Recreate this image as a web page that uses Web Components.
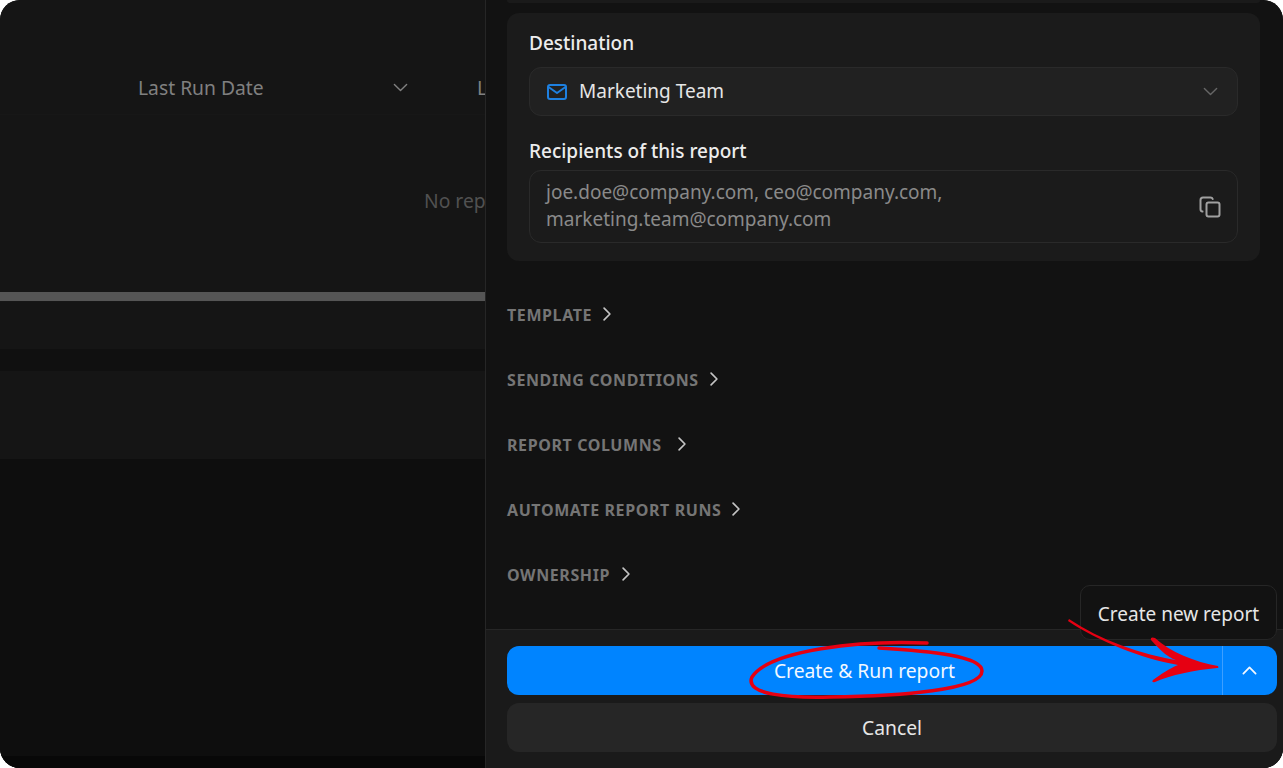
<!DOCTYPE html>
<html lang="en">
<head>
<meta charset="utf-8">
<title>Create report</title>
<style>
    html, body { margin: 0; height: 100%; background: #fff; }
    body { font-family: "Noto Sans", "Liberation Sans", sans-serif; overflow: hidden; }
</style>
</head>
<body>
<app-shell>
    <report-table slot="table"></report-table>
    <report-panel slot="panel">
        <destination-card></destination-card>
        <section-row slot="sections">TEMPLATE</section-row>
        <section-row slot="sections">SENDING CONDITIONS</section-row>
        <section-row slot="sections" style="--gap: 17px">REPORT COLUMNS</section-row>
        <section-row slot="sections">AUTOMATE REPORT RUNS</section-row>
        <section-row slot="sections" style="--gap: 13px">OWNERSHIP</section-row>
        <split-button slot="footer">Create &amp; Run report</split-button>
        <plain-button slot="footer">Cancel</plain-button>
    </report-panel>
    <red-markup slot="markup"></red-markup>
</app-shell>

<script>
const chevron = (dir, size, color, width = 1.6) => {
    const paths = {
        down: 'M5 8.5l7 7 7-7',
        up: 'M5 15.5l7-7 7 7',
        right: 'M8.5 5l7 7-7 7'
    };
    return `<svg width="${size}" height="${size}" viewBox="0 0 24 24" fill="none" stroke="${color}" stroke-width="${width}" stroke-linecap="round" stroke-linejoin="round"><path d="${paths[dir]}"/></svg>`;
};

class AppShell extends HTMLElement {
    constructor() {
        super();
        this.attachShadow({ mode: 'open' });
        this.shadowRoot.innerHTML = `
            <style>
                :host {
                    display: grid;
                    grid-template-columns: 485px 1fr;
                    position: relative;
                    width: 1283px;
                    height: 768px;
                    border-radius: 20px;
                    overflow: hidden;
                    background: #121212;
                }
            </style>
            <slot name="table"></slot>
            <slot name="panel"></slot>
            <slot name="markup"></slot>
        `;
    }
}

class ReportTable extends HTMLElement {
    constructor() {
        super();
        this.attachShadow({ mode: 'open' });
        this.shadowRoot.innerHTML = `
            <style>
                :host {
                    display: flex;
                    flex-direction: column;
                    height: 768px;
                    overflow: hidden;
                    background: #151515;
                    white-space: nowrap;
                    font-size: 19.3px;
                }
                .head {
                    height: 115px;
                    flex: none;
                    display: flex;
                    align-items: center;
                    padding: 61px 0 0 138px;
                    box-sizing: border-box;
                    border-bottom: 1px solid #171717;
                    color: #808080;
                }
                .col { flex: none; width: 273px; display: flex; align-items: center; justify-content: space-between; }
                .next { flex: none; margin-left: 66px; letter-spacing: -3px; }
                .empty {
                    flex: none;
                    height: 177px;
                    box-sizing: border-box;
                    padding: 73px 0 0 424px;
                    color: #515151;
                    line-height: 26px;
                }
                .scrollbar { flex: none; height: 9px; background: #555; }
                .row { flex: none; height: 48px; border-top: 1px solid #171717; box-sizing: border-box; }
                .gap { flex: none; height: 22px; background: #101010; }
                .totals { flex: none; height: 88px; }
                .rest { flex: 1; background: #0e0e0e; }
                .edge { flex: none; height: 12px; background: #080808; }
            </style>
            <div class="head">
                <div class="col"><span>Last Run Date</span>${chevron('down', 21, '#808080')}</div>
                <span class="next">L</span>
            </div>
            <div class="empty">No rep</div>
            <div class="scrollbar"></div>
            <div class="row"></div>
            <div class="gap"></div>
            <div class="totals"></div>
            <div class="rest"></div>
            <div class="edge"></div>
        `;
    }
}

class ReportPanel extends HTMLElement {
    constructor() {
        super();
        this.attachShadow({ mode: 'open' });
        this.shadowRoot.innerHTML = `
            <style>
                :host {
                    display: flex;
                    flex-direction: column;
                    height: 768px;
                    position: relative;
                    background: #121212;
                    border-left: 1px solid #262626;
                    box-sizing: border-box;
                }
                .body { flex: 1; padding: 0 23px 0 21px; min-height: 0; }
                .sliver { height: 3px; margin-bottom: 10px; background: #1a1a1a; border-radius: 0 0 10px 10px; }
                .sections { margin-top: 22px; }
                .footer {
                    flex: none;
                    height: 139px;
                    box-sizing: border-box;
                    border-top: 1px solid #262626;
                    background: #1a1a1a;
                    padding: 16px 6px 0 21px;
                    display: flex;
                    flex-direction: column;
                    gap: 8px;
                }
                .tip {
                    position: absolute;
                    right: 6px;
                    top: 585px;
                    width: 197px;
                    height: 55px;
                    box-sizing: border-box;
                    padding-top: 2px;
                    background: #121212;
                    border: 1px solid #262626;
                    border-radius: 10px;
                    color: #e6e6e6;
                    font-size: 19px;
                    display: flex;
                    align-items: center;
                    justify-content: center;
                }
            </style>
            <div class="body">
                <div class="sliver"></div>
                <slot></slot>
                <div class="sections"><slot name="sections"></slot></div>
            </div>
            <div class="footer"><slot name="footer"></slot></div>
            <div class="tip">Create new report</div>
        `;
    }
}

class DestinationCard extends HTMLElement {
    constructor() {
        super();
        this.attachShadow({ mode: 'open' });
        this.shadowRoot.innerHTML = `
            <style>
                :host {
                    display: block;
                    height: 248px;
                    box-sizing: border-box;
                    padding: 18px 22px;
                    background: #1b1b1b;
                    border-radius: 12px;
                    font-size: 19px;
                }
                label { display: block; height: 24px; line-height: 24px; color: #ededed; font-weight: 500; }
                .select {
                    height: 49px;
                    margin: 12px 0 23px;
                    box-sizing: border-box;
                    display: flex;
                    align-items: center;
                    padding: 0 16px 0 17px;
                    background: #212121;
                    border: 1px solid #2a2a2a;
                    border-radius: 12px;
                    color: #e6e6e6;
                }
                .select span { flex: 1; margin-left: 12px; line-height: 24px; margin-top: -1px; }
                .box {
                    height: 73px;
                    margin-top: 7px;
                    box-sizing: border-box;
                    display: flex;
                    align-items: center;
                    justify-content: space-between;
                    padding: 0 16px;
                    background: #1b1b1b;
                    border: 1px solid #2a2a2a;
                    border-radius: 12px;
                    color: #8a8a8a;
                    line-height: 27px;
                }
                .box div { margin-top: -2px; }
            </style>
            <label>Destination</label>
            <div class="select">
                <svg width="20" height="16" viewBox="0 0 20 16" fill="none" stroke="#1e80e0" stroke-width="2" stroke-linejoin="round" stroke-linecap="round"><rect x="1" y="1" width="18" height="14" rx="2"/><path d="M1.500 3l8.500 6 8.500-6"/></svg>
                <span>Marketing Team</span>
                ${chevron('down', 21, '#666')}
            </div>
            <label>Recipients of this report</label>
            <div class="box">
                <div>joe.doe@company.com, ceo@company.com,<br>marketing.team@company.com</div>
                <svg width="22" height="22" viewBox="0 0 22 22" fill="none" stroke="#a0a0a0" stroke-width="2" stroke-linecap="round" stroke-linejoin="round"><rect x="7.500" y="6.500" width="13" height="14" rx="2"/><path d="M3.500 15.500c-1.200-.2-2-1.100-2-2.300V4c0-1.400 1.100-2.500 2.500-2.500h7.500c1 0 1.900.6 2.200 1.500"/></svg>
            </div>
        `;
    }
}

class SectionRow extends HTMLElement {
    constructor() {
        super();
        this.attachShadow({ mode: 'open' });
        this.shadowRoot.innerHTML = `
            <style>
                :host {
                    display: flex;
                    align-items: center;
                    height: 65px;
                    color: #757575;
                    font-size: 16px;
                    line-height: 23px;
                    font-weight: 700;
                    letter-spacing: 0.6px;
                }
                svg { margin-left: calc(var(--gap, 12px) - 7px); margin-top: -3px; }
            </style>
            <slot></slot>
            ${chevron('right', 20, '#c4c4c4', 2)}
        `;
    }
}

class SplitButton extends HTMLElement {
    constructor() {
        super();
        this.attachShadow({ mode: 'open' });
        this.shadowRoot.innerHTML = `
            <style>
                :host {
                    display: flex;
                    height: 49px;
                    background: #0084ff;
                    border-radius: 12px;
                    color: #f2f8ff;
                    font-size: 19.3px;
                }
                .main { flex: 1; display: flex; align-items: center; justify-content: center; }
                .more { flex: none; width: 55px; padding-right: 2px; display: flex; align-items: center; justify-content: center; border-left: 1px solid #3d9fff; box-sizing: border-box; }
            </style>
            <div class="main"><slot></slot></div>
            <div class="more">${chevron('up', 21, '#f2f8ff', 2)}</div>
        `;
    }
}

class PlainButton extends HTMLElement {
    constructor() {
        super();
        this.attachShadow({ mode: 'open' });
        this.shadowRoot.innerHTML = `
            <style>
                :host {
                    display: flex;
                    align-items: center;
                    justify-content: center;
                    height: 49px;
                    background: #262626;
                    border-radius: 12px;
                    color: #e6e6e6;
                    font-size: 19.3px;
                }
            </style>
            <slot></slot>
        `;
    }
}

// hand drawn arrow and circle on top of the screenshot
class RedMarkup extends HTMLElement {
    constructor() {
        super();
        this.attachShadow({ mode: 'open' });
        this.shadowRoot.innerHTML = `
            <style>
                :host { position: absolute; inset: 0; pointer-events: none; }
                svg { display: block; }
            </style>
            <svg width="1283" height="768" viewBox="0 0 1283 768">
                <path fill="none" stroke="#e60012" stroke-width="3.5" stroke-linecap="round" d="M927 643C860 640 770 650 752 677C744 695 790 698 830 697C900 696 982 690 982 671C982 656 930 651 879 648"/>
                <path fill="#e60012" d="M1069 619C1100 640 1140 654 1180 661C1170 660 1160 650 1151 640C1150 637 1153 637 1155 638C1170 652 1195 662 1218 666C1219 668 1218 668 1217 668C1195 670 1170 675 1155 682C1152 683 1152 681 1153 680C1160 675 1170 668 1178 665C1140 658 1100 642 1068 621Z"/>
            </svg>
        `;
    }
}

customElements.define('app-shell', AppShell);
customElements.define('report-table', ReportTable);
customElements.define('report-panel', ReportPanel);
customElements.define('destination-card', DestinationCard);
customElements.define('section-row', SectionRow);
customElements.define('split-button', SplitButton);
customElements.define('plain-button', PlainButton);
customElements.define('red-markup', RedMarkup);
</script>
</body>
</html>
